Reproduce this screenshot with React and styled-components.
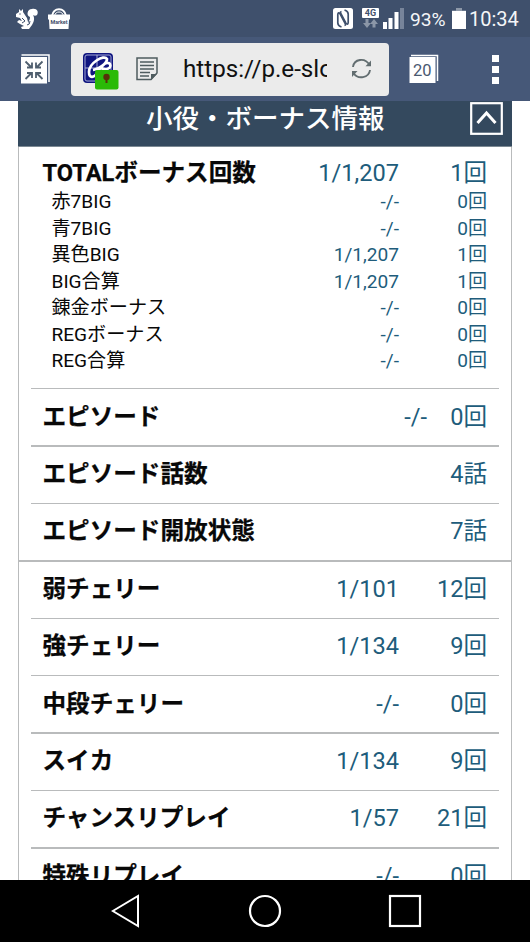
import React from "react";
import styled, { createGlobalStyle } from "styled-components";

const Global = createGlobalStyle`
  * { box-sizing: border-box; }
  body { margin: 0; background: #fff; }
  svg { display: block; flex: none; }
`;

const Screen = styled.div`
  width: 530px;
  height: 942px;
  display: flex;
  flex-direction: column;
  overflow: hidden;
  background: #fff;
  font-family: Roboto, "Noto Sans CJK JP", sans-serif;
`;

const StatusBar = styled.header`
  height: 37px;
  flex: none;
  display: flex;
  align-items: center;
  justify-content: space-between;
  padding: 0 10px 0 15px;
  background: #3f506c;
  color: #f4f6f8;
`;

const StatusGroup = styled.div`
  display: flex;
  align-items: center;
`;

const StatusIcons = styled(StatusGroup)`
  gap: ${(p) => p.$gap}px;
`;

const SignalGroup = styled(StatusGroup)`
  gap: 4px;
  margin-left: 9px;
`;

const StatusText = styled.span`
  width: ${(p) => p.$width}px;
  margin: 0 ${(p) => p.$after}px 0 ${(p) => p.$before}px;
  font-size: ${(p) => p.$size}px;
  line-height: 37px;
  padding-top: 2px;
  white-space: nowrap;
`;

const Toolbar = styled.div`
  height: 64px;
  flex: none;
  display: flex;
  align-items: center;
  padding: 0 27px 0 20px;
  background: #465878;
`;

const AddressBar = styled.div`
  width: 318px;
  height: 53px;
  margin: 0 20px 0 21px;
  padding: 0 17px 0 11px;
  display: flex;
  align-items: center;
  border-radius: 4px;
  background: #ebebeb;
`;

const SiteSlot = styled.div`
  padding-top: 4px;
  margin-right: 17px;
`;

const Address = styled.span`
  width: 144px;
  margin: 0 auto 0 25px;
  overflow: hidden;
  white-space: nowrap;
  font-size: 24.2px;
  line-height: 40px;
  color: #111;
`;

const MenuButton = styled.div`
  margin-left: auto;
  width: 16px;
  display: flex;
  flex-direction: column;
  align-items: center;
  gap: 4px;
`;

const MenuDot = styled.i`
  width: 7px;
  height: 7px;
  background: #fff;
`;

const Page = styled.main`
  height: 779px;
  flex: none;
  overflow: hidden;
  padding: 0 18px;
`;

const Panel = styled.section`
  width: 494px;
  height: 100%;
  border: solid #b9bbbc;
  border-width: 0 1px;
`;

const PanelHeader = styled.div`
  height: 46px;
  margin: 0 -1px;
  padding: 0 9.5px 10px 128px;
  display: flex;
  align-items: center;
  justify-content: space-between;
  background: #34495e;
  border-bottom: 1px solid #7c8993;
`;

const PanelTitle = styled.h1`
  margin: 0;
  font-size: 26.5px;
  line-height: 36px;
  font-weight: 500;
  color: #fff;
  white-space: nowrap;
`;

const Section = styled.div`
  margin: 0 12px;
`;

const SectionRule = styled.div`
  height: 1.4px;
  margin: 0 ${(p) => (p.$full ? 0 : 12)}px;
  background: #b9bbbc;
`;

const BonusBlock = styled(Section)`
  height: 241px;
  padding: 12px 0 0;
`;

const Row = styled.div`
  height: ${(p) => p.$height}px;
  display: flex;
  align-items: center;
  padding: 0 12px ${(p) => p.$lift || 0}px ${(p) => (p.$small ? 20.5 : 11.5)}px;
  font-size: ${(p) => (p.$small ? 19.1 : 23.6)}px;
  line-height: 26px;
  white-space: nowrap;
`;

const SubRows = styled.div`
  padding-top: 0.5px;
`;

const Label = styled.span`
  flex: 1;
  font-weight: ${(p) => (p.$bold ? 700 : 400)};
  color: #080808;
  -webkit-text-stroke: ${(p) => (p.$bold ? 0.25 : 0)}px #080808;
`;

const Rate = styled.span`
  color: #205c7b;
`;

const Count = styled.span`
  width: ${(p) => p.$width}px;
  text-align: right;
  color: #205c7b;
`;

const NavBar = styled.nav`
  height: 62px;
  flex: none;
  display: flex;
  align-items: center;
  padding-left: 111px;
  background: #000;
`;

const NavButton = styled.div`
  margin-right: ${(p) => p.$gap || 0}px;
`;

const SquirrelIcon = () => (
  <svg width="24" height="22" viewBox="0 0 24 22" fill="#fff">
    <path d="M13 19C12 15 15 13 15 9C11 8 12 1 17 1C22 0 24 4 22 7C21 8 19 8 18 7C20 10 19 14 17 17L14 21H7L6 19L9 18L5 16L2 14L4 12L7 13L5 10L1 9L1 6L4 4L4 1L6 3L8 1L8 4L10 7L12 10L13 14Z" />
    <path d="M7 10L10 13L7 15M15 13Q15 17 12 17" fill="none" stroke="#3f506c" strokeWidth="1" />
    <circle cx="5" cy="6" r=".7" fill="#3f506c" />
  </svg>
);

const MarketLabel = styled.text`
  font: 700 5.4px Roboto, sans-serif;
  fill: #3f506c;
`;

const MarketIcon = () => (
  <svg width="24" height="22" viewBox="0 0 24 22">
    <path d="M5 8C6 3 8 1.3 12 1.3S18 3 19 8" fill="none" stroke="#fff" strokeWidth="2" />
    <path d="M7.500 8C8 5 10 4 12 4S16 5 16.500 8" fill="none" stroke="#fff" strokeWidth="1" />
    <path d="M1 6.500H23V11L22 12L21.500 21H2.500L2 12L1 11Z" fill="#fff" />
    <MarketLabel x="12" y="16.300" textAnchor="middle">Market</MarketLabel>
  </svg>
);

const NfcIcon = () => (
  <svg width="20" height="21" viewBox="0 0 20 21">
    <rect width="20" height="21" rx="2.500" fill="#fff" />
    <path d="M8.500 19Q5 18 4.800 15V6.500Q5 3.500 7.200 6L12.500 16Q13 17 11.500 17.500" fill="none" stroke="#3f506c" strokeWidth="1.700" />
    <path d="M11.500 2Q15 3 15.200 6V14.500Q15 17.500 12.800 15L7.500 5Q7 4 8.500 3.500" fill="none" stroke="#3f506c" strokeWidth="1.700" />
  </svg>
);

const NetworkLabel = styled.text`
  font: 700 9px Roboto, sans-serif;
  fill: #3f506c;
`;

const NetworkIcon = () => (
  <svg width="17" height="21" viewBox="0 0 17 21">
    <rect width="17" height="10" rx="1" fill="#fff" />
    <NetworkLabel x="8.500" y="8.300" textAnchor="middle">4G</NetworkLabel>
    <path d="M3.500 11H6.500V15H9L5 20L1 15H3.500ZM10.500 19.500H13.500V16H16L12 11L8 16H10.500Z" fill="#8b96a7" />
  </svg>
);

const SignalIcon = () => (
  <svg width="21" height="21" viewBox="0 0 21 21" fill="#fff">
    <path d="M0 14H4V21H0ZM5.500 10H9.500V21H5.500ZM11.500 4H15.500V21H11.500Z" />
    <path d="M17 0H21V21H17Z" fill="#77849a" />
  </svg>
);

const BatteryIcon = () => (
  <svg width="14" height="21" viewBox="0 0 14 21">
    <path d="M4 0H10V2.500H14V5H0V2.500H4Z" fill="#8d98a8" />
    <path d="M0 3H14V21H0Z" fill="#fff" />
  </svg>
);

const CollapseIcon = () => (
  <svg width="30" height="30" viewBox="0 0 30 30">
    <path d="M1.500 1H29V28" fill="none" stroke="#fff" strokeWidth="1.500" />
    <rect x="1" y="3" width="26" height="26.500" fill="#fff" />
    <path d="M5.500 7.500L11.500 13.500M12 8.500V13.500H7M22.500 7.500L16.500 13.500M16 8.500V13.500H21M5.500 25L11.500 19M7 19H12V24M22.500 25L16.500 19M16 24V19H21" fill="none" stroke="#4f5e6e" strokeWidth="1.800" />
  </svg>
);

const SiteIcon = () => (
  <svg width="37" height="39" viewBox="0 0 37 39">
    <rect x="1" y="1" width="30" height="30" rx="4" fill="#101580" />
    <rect x="3" y="3" width="26" height="26" rx="2" fill="none" stroke="#a2a7d4" strokeWidth="1" />
    <path d="M3 16H29M15 3V29" stroke="#aeb2d8" strokeWidth="1" />
    <path d="M11 18C18 17 25 11 25 7C22 2 7 11 7 20C7 27 12 26 16 20C19 13 25 9 28 12C30 16 24 19 19 16" fill="none" stroke="#fff" strokeWidth="2.700" />
    <rect x="13" y="18" width="23.500" height="19.500" rx="2" fill="#2aba07" />
    <circle cx="24.500" cy="25" r="3.200" fill="#573009" />
    <path d="M23.500 26H25.500V31H23.500Z" fill="#573009" />
  </svg>
);

const ReaderIcon = () => (
  <svg width="22" height="24" viewBox="0 0 22 24">
    <path d="M1 1H21V16L15 22.500H1Z" fill="none" stroke="#4f5c5f" strokeWidth="1.500" />
    <path d="M4 5H18M4 8.500H18M4 12H18M4 15.500H14M4 19H13" stroke="#4f5c5f" strokeWidth="1.500" />
    <path d="M15 23V17H21Z" fill="#4f5c5f" />
  </svg>
);

const ReloadIcon = () => (
  <svg width="21" height="22" viewBox="0 0 21 22" fill="none" stroke="#626d70" strokeWidth="1.900">
    <path d="M2 9C3 1 14 -1 18.500 7M19 12C18 20 7 22 2.500 15" />
    <path d="M20 2.500V8.300H14.500ZM1 19V13H6.500Z" fill="#626d70" stroke="none" />
  </svg>
);

const TabsLabel = styled.text`
  font: 400 16.5px Roboto, sans-serif;
  fill: #4a5971;
`;

const TabsIcon = () => (
  <svg width="30" height="30" viewBox="0 0 30 30">
    <path d="M2 1.500H28.500V27" fill="none" stroke="#fff" strokeWidth="1.500" />
    <rect x="0.500" y="3" width="26" height="26" fill="#fff" />
    <TabsLabel x="13.300" y="22" textAnchor="middle">20</TabsLabel>
  </svg>
);

const ToggleIcon = () => (
  <svg width="33" height="33" viewBox="0 0 33 33" fill="none" stroke="#fff">
    <rect x="1.200" y="1.200" width="30.600" height="30.600" strokeWidth="2.200" />
    <path d="M7.500 21L16.500 11L25.500 21" strokeWidth="3" />
  </svg>
);

const BackIcon = () => (
  <svg width="28" height="34" viewBox="0 0 28 34">
    <path d="M1.800 17L27 2V32Z" fill="none" stroke="#fff" strokeWidth="2" />
  </svg>
);

const HomeIcon = () => (
  <svg width="34" height="34" viewBox="0 0 34 34">
    <circle cx="17" cy="17" r="15" fill="none" stroke="#fff" strokeWidth="2.200" />
  </svg>
);

const RecentIcon = () => (
  <svg width="34" height="34" viewBox="0 0 34 34">
    <rect x="2" y="2" width="30" height="30" fill="none" stroke="#fff" strokeWidth="2.200" />
  </svg>
);

const bonuses = [
  ["赤7BIG", "-/-", "0回"],
  ["青7BIG", "-/-", "0回"],
  ["異色BIG", "1/1,207", "1回"],
  ["BIG合算", "1/1,207", "1回"],
  ["錬金ボーナス", "-/-", "0回"],
  ["REGボーナス", "-/-", "0回"],
  ["REG合算", "-/-", "0回"],
];

const entries = [
  { label: "エピソード", rate: "-/-", count: "0回", width: 60 },
  { label: "エピソード話数", count: "4話" },
  { label: "エピソード開放状態", count: "7話" },
  { label: "弱チェリー", rate: "1/101", count: "12回", full: true },
  { label: "強チェリー", rate: "1/134", count: "9回" },
  { label: "中段チェリー", rate: "-/-", count: "0回" },
  { label: "スイカ", rate: "1/134", count: "9回" },
  { label: "チャンスリプレイ", rate: "1/57", count: "21回" },
  { label: "特殊リプレイ", rate: "-/-", count: "0回" },
];

export default function App() {
  return (
    <Screen>
      <Global />
      <StatusBar>
        <StatusIcons $gap={8}>
          <SquirrelIcon />
          <MarketIcon />
        </StatusIcons>
        <StatusGroup>
          <NfcIcon />
          <SignalGroup>
            <NetworkIcon />
            <SignalIcon />
          </SignalGroup>
          <StatusText $size={19.2} $width={36} $before={6} $after={6}>93%</StatusText>
          <BatteryIcon />
          <StatusText $size={20} $width={51} $before={3} $after={0}>10:34</StatusText>
        </StatusGroup>
      </StatusBar>
      <Toolbar>
        <CollapseIcon />
        <AddressBar>
          <SiteSlot>
            <SiteIcon />
          </SiteSlot>
          <ReaderIcon />
          <Address>https://p.e-slot</Address>
          <ReloadIcon />
        </AddressBar>
        <TabsIcon />
        <MenuButton>
          <MenuDot />
          <MenuDot />
          <MenuDot />
        </MenuButton>
      </Toolbar>
      <Page>
        <Panel>
          <PanelHeader>
            <PanelTitle>小役・ボーナス情報</PanelTitle>
            <ToggleIcon />
          </PanelHeader>
          <BonusBlock>
            <Row $height={29.5} $lift={1}>
              <Label $bold>TOTALボーナス回数</Label>
              <Rate>1/1,207</Rate>
              <Count $width={88}>1回</Count>
            </Row>
            <SubRows>
              {bonuses.map(([label, rate, count]) => (
                <Row key={label} $height={26.5} $small>
                  <Label>{label}</Label>
                  <Rate>{rate}</Rate>
                  <Count $width={88}>{count}</Count>
                </Row>
              ))}
            </SubRows>
          </BonusBlock>
          {entries.map((e) => (
            <React.Fragment key={e.label}>
              <SectionRule $full={e.full} />
              <Section>
                <Row $height={56} $lift={1.6}>
                  <Label $bold>{e.label}</Label>
                  {e.rate && <Rate>{e.rate}</Rate>}
                  <Count $width={e.width || 88}>{e.count}</Count>
                </Row>
              </Section>
            </React.Fragment>
          ))}
        </Panel>
      </Page>
      <NavBar>
        <NavButton $gap={109}>
          <BackIcon />
        </NavButton>
        <NavButton $gap={106}>
          <HomeIcon />
        </NavButton>
        <NavButton>
          <RecentIcon />
        </NavButton>
      </NavBar>
    </Screen>
  );
}
